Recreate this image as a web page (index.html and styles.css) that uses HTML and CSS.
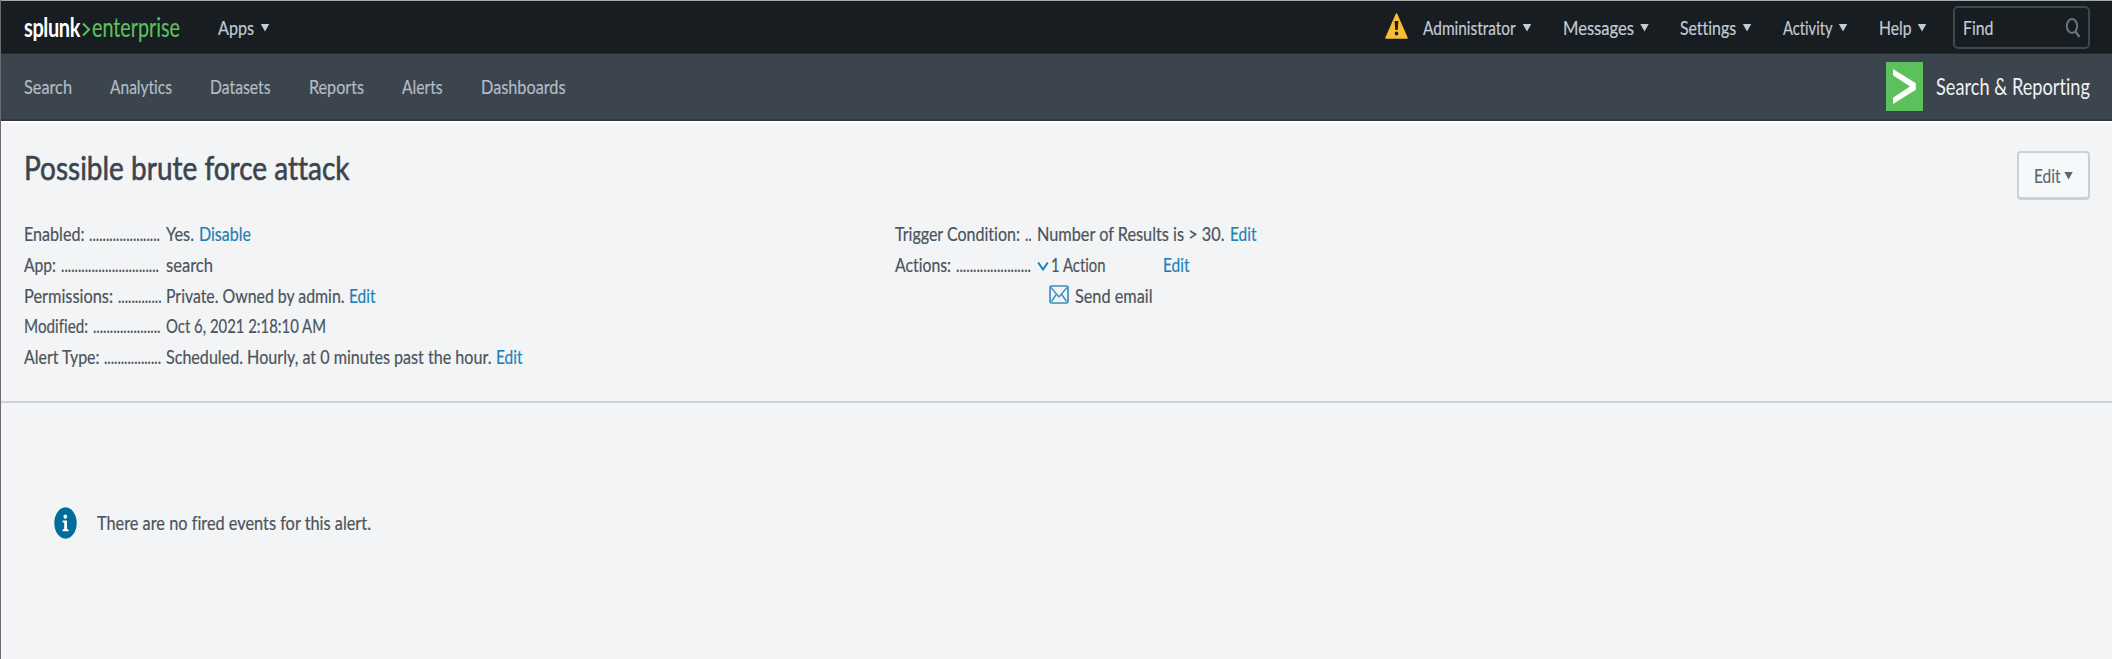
FILE: index.html
```html
<!DOCTYPE html>
<html lang="en">
<head>
<meta charset="utf-8">
<title>Possible brute force attack</title>
<link rel="stylesheet" href="styles.css">
</head>
<body>
<header class="topbar">
  <div class="brand"><span class="fit splunk" data-w="56">splunk</span><svg class="brand-mark" width="8" height="15" viewBox="0 0 8 15"><path d="M1 1.5 7 7.5 1 13.5" fill="none" stroke="#5cc05c" stroke-width="2"/></svg><span class="fit enterprise" data-w="88">enterprise</span></div>
  <a class="menu apps"><span class="fit" data-w="36">Apps</span><i class="caret"></i></a>
  <nav class="menus">
    <svg class="warning" width="23" height="26" viewBox="0 0 23 26"><path d="M11.5 1 22 25H1Z" fill="#f8be34" stroke="#f8be34" stroke-width="1.6" stroke-linejoin="round"/><path d="M9.6 8h3.8l-.7 9h-2.4z" fill="#1a1f24"/><ellipse cx="11.5" cy="20.4" rx="1.8" ry="2" fill="#1a1f24"/></svg>
    <a class="menu"><span class="fit" data-w="92.6">Administrator</span><i class="caret"></i></a>
    <a class="menu"><span class="fit" data-w="71">Messages</span><i class="caret"></i></a>
    <a class="menu"><span class="fit" data-w="56">Settings</span><i class="caret"></i></a>
    <a class="menu"><span class="fit" data-w="49.5">Activity</span><i class="caret"></i></a>
    <a class="menu"><span class="fit" data-w="32.5">Help</span><i class="caret"></i></a>
  </nav>
  <div class="find"><span class="fit" data-w="30.5">Find</span><svg width="16" height="20" viewBox="0 0 16 20"><ellipse cx="7" cy="8" rx="5.2" ry="7" fill="none" stroke="#6b747c" stroke-width="2"/><path d="M10.4 13.4 14.4 19" stroke="#6b747c" stroke-width="2.4"/></svg></div>
</header>
<div class="appbar">
  <nav class="tabs">
    <span class="fit" data-w="48">Search</span>
    <span class="fit" data-w="62">Analytics</span>
    <span class="fit" data-w="60.5">Datasets</span>
    <span class="fit" data-w="55">Reports</span>
    <span class="fit" data-w="40.5">Alerts</span>
    <span class="fit" data-w="84.5">Dashboards</span>
  </nav>
  <svg class="app-icon" width="37" height="49" viewBox="0 0 37 49"><rect width="37" height="49" fill="#5cc05c"/><path d="M7 7 29.8 21.3v6.4L7 42v-6.2L24 24.5 7 13.2Z" fill="#fff"/></svg>
  <span class="fit app-name" data-w="154">Search &amp; Reporting</span>
</div>
<main>
  <section class="summary">
    <div class="heading">
      <h1><span class="fit" data-w="325.5">Possible brute force attack</span></h1>
      <button class="edit"><span class="fit" data-w="26.5">Edit</span><i class="caret"></i></button>
    </div>
    <div class="columns">
      <dl>
        <dt><span class="fit" data-w="60.5">Enabled:</span><span class="fit" data-w="71">.....................</span></dt>
        <dd><span class="fit" data-w="28">Yes.</span><a class="fit" data-w="52">Disable</a></dd>
        <dt><span class="fit" data-w="32">App:</span><span class="fit" data-w="98">.............................</span></dt>
        <dd><span class="fit" data-w="47">search</span></dd>
        <dt><span class="fit" data-w="89">Permissions:</span><span class="fit" data-w="43.5">.............</span></dt>
        <dd><span class="fit" data-w="178.5">Private. Owned by admin.</span><a class="fit" data-w="26.5">Edit</a></dd>
        <dt><span class="fit" data-w="64">Modified:</span><span class="fit" data-w="67.5">....................</span></dt>
        <dd><span class="fit" data-w="160">Oct 6, 2021 2:18:10 AM</span></dd>
        <dt><span class="fit" data-w="75.5">Alert Type:</span><span class="fit" data-w="57">.................</span></dt>
        <dd><span class="fit" data-w="325.5">Scheduled. Hourly, at 0 minutes past the hour.</span><a class="fit" data-w="26.5">Edit</a></dd>
      </dl>
      <dl>
        <dt><span class="fit" data-w="125">Trigger Condition:</span><span class="fit" data-w="6.6">..</span></dt>
        <dd><span class="fit" data-w="187.5">Number of Results is &gt; 30.</span><a class="fit" data-w="26.5">Edit</a></dd>
        <dt><span class="fit" data-w="56">Actions:</span><span class="fit" data-w="75">......................</span></dt>
        <dd class="action"><svg width="12" height="11" viewBox="0 0 12 11"><path d="M1.2 1.5 6 8.5l4.8-7" fill="none" stroke="#1e80b8" stroke-width="2"/></svg><span class="fit" data-w="54.5">1 Action</span><a class="fit" data-w="26.5">Edit</a></dd>
        <dd class="email"><svg width="20" height="19" viewBox="0 0 20 19"><rect x="1" y="1" width="18" height="17" rx="1.5" fill="none" stroke="#3b8fc0" stroke-width="1.7"/><path d="M2 2.5 10 12l8-9.5M2.5 16.5 7.5 9M17.5 16.5 12.5 9" fill="none" stroke="#3b8fc0" stroke-width="1.4"/></svg><span class="fit" data-w="77.5">Send email</span></dd>
      </dl>
    </div>
  </section>
  <section class="notice">
    <svg width="23" height="32" viewBox="0 0 23 32"><ellipse cx="11.5" cy="16" rx="11.2" ry="15.7" fill="#006d9c"/><ellipse cx="11.3" cy="9.6" rx="1.8" ry="2.2" fill="#fff"/><path d="M8.7 13.4h4.3v8.8h1.5v2H8.6v-2h1.6v-6.8H8.7z" fill="#fff"/></svg>
    <span class="fit" data-w="274">There are no fired events for this alert.</span>
  </section>
</main>
<script src="fit.js"></script>
</body>
</html>
```
FILE: styles.css
```css
* { box-sizing: border-box; }
html, body { height: 100%; }
body {
  margin: 0;
  display: flex;
  flex-direction: column;
  overflow: hidden;
  border-left: 1px solid #6c6b70;
  background: #f2f4f5;
  color: #4b535b;
  font: 19.5px/30.6px Lato, "Liberation Sans", sans-serif;
  font-variant-ligatures: none;
  -webkit-text-stroke: 0.2px currentColor;
}
.fit { display: inline-block; flex: none; white-space: pre; }
.fit > span { display: inline-block; transform-origin: 0 50%; }
.caret {
  width: 9px;
  height: 8px;
  flex: none;
  background: currentColor;
  clip-path: polygon(0 0, 100% 0, 50% 100%);
}

.topbar {
  flex: none;
  height: 53px;
  display: flex;
  align-items: center;
  padding: 1px 22.5px 0 23px;
  border-top: 1px solid #a3a9aa;
  background: #171d21;
  color: #c3cbd4;
}
.brand { display: flex; align-items: center; width: 194px; font-size: 26px; }
.splunk { color: #fff; font-weight: 700; letter-spacing: -0.5px; -webkit-text-stroke: 0; }
.brand-mark { margin: 3px 2px 0 2px; }
.enterprise { color: #5cc05c; }
.menu { display: flex; align-items: center; gap: 6.5px; }
.menu .fit, .find .fit { padding-top: 1px; }
.menus { display: flex; align-items: center; gap: 31px; margin: 0 26px 0 auto; }
.warning { margin: -3px -16px 0 0; }
.find {
  width: 137px;
  height: 43px;
  display: flex;
  align-items: center;
  justify-content: space-between;
  padding: 0 7px 0 8px;
  border: 2px solid #3f474f;
  border-radius: 5px;
}

.appbar {
  flex: none;
  height: 68px;
  display: flex;
  align-items: center;
  padding: 0 22.5px 0 22.7px;
  border-top: 1px solid #252c31;
  border-bottom: 2px solid #31383f;
  background: #3c444d;
  color: #b3bcc6;
}
.tabs { display: flex; gap: 38.3px; margin-right: auto; padding-top: 2px; }
.app-icon { margin-right: 13px; }
.app-name { padding-top: 2px; color: #f0f2f4; font-size: 22.5px; -webkit-text-stroke: 0; }

.summary {
  height: 282px;
  padding: 28px 22.5px 0 22.6px;
  border-top: 2px solid #fff;
  border-bottom: 2px solid #cfd3d8;
}
.heading { display: flex; justify-content: space-between; height: 68.4px; }
h1 {
  margin: 0;
  font-size: 33px;
  font-weight: 400;
  line-height: 32px;
  color: #3c444d;
  -webkit-text-stroke: 0.6px #3c444d;
}
.edit {
  width: 73px;
  height: 49px;
  display: flex;
  align-items: center;
  gap: 4px;
  padding: 0 0 0 15px;
  border: 2px solid #cbd0d7;
  border-bottom-width: 3px;
  border-radius: 4px;
  background: #f7f8fa;
  color: #5c6773;
  font: inherit;
}
.edit .fit { padding-top: 3px; }
.edit .caret { margin-top: 1px; }
.columns { display: grid; grid-template-columns: 871.2px 1fr; }
dl {
  display: grid;
  grid-template-columns: 142.3px 1fr;
  align-content: start;
  margin: 0;
}
dt, dd { display: flex; gap: 5px; height: 30.6px; margin: 0; }
dd a { color: #1e80b8; }
.action svg { margin: 11px -3px 0 0; }
.action { gap: 5px; }
.action a { margin-left: 52.5px; }
.email { grid-column: 2; padding-left: 12px; gap: 5.5px; }
.email svg { margin-top: 4px; }

.notice { display: flex; align-items: center; gap: 20px; padding: 104px 0 0 53px; }
.notice .fit { padding-top: 1px; }
```
FILE: fit.js
```js
document.querySelectorAll('.fit').forEach(function (label) {
  var inner = document.createElement('span');
  inner.textContent = label.textContent;
  label.textContent = '';
  label.appendChild(inner);
  var width = Number(label.dataset.w);
  var natural = inner.getBoundingClientRect().width;
  label.style.width = width + 'px';
  inner.style.transform = 'scaleX(' + width / natural + ')';
});
```
